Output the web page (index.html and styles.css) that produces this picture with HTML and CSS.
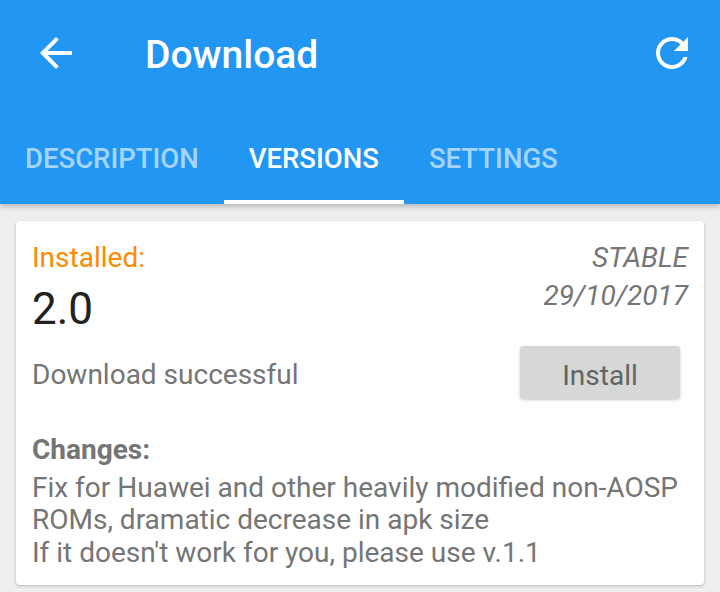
FILE: index.html
```html
<!DOCTYPE html>
<html lang="en">
<head>
<meta charset="utf-8">
<title>Download</title>
<link rel="stylesheet" href="styles.css">
</head>
<body>
<header class="appbar">
  <div class="toolbar">
    <svg class="icon back" viewBox="0 0 24 24" width="48" height="48"><path fill="#fff" d="M20 11H7.83l5.59-5.59L12 4l-8 8 8 8 1.41-1.41L7.83 13H20v-2z"/></svg>
    <h1 class="title">Download</h1>
    <svg class="icon refresh" viewBox="0 0 24 24" width="48" height="48"><path fill="#fff" d="M17.65 6.35C16.2 4.9 14.21 4 12 4c-4.42 0-7.99 3.58-7.99 8s3.57 8 7.99 8c3.73 0 6.84-2.55 7.73-6h-2.08c-.82 2.33-3.04 4-5.65 4-3.31 0-6-2.69-6-6s2.69-6 6-6c1.66 0 3.14.69 4.22 1.78L13 11h7V4l-2.35 2.35z"/></svg>
  </div>
  <nav class="tabs">
    <div class="tab">DESCRIPTION</div>
    <div class="tab active">VERSIONS</div>
    <div class="tab">SETTINGS</div>
  </nav>
</header>
<main class="content">
  <section class="card">
    <div class="row top">
      <div class="col">
        <div class="installed">Installed:</div>
        <div class="version">2.0</div>
      </div>
      <div class="col meta">
        <div class="channel">STABLE</div>
        <div class="date">29/10/2017</div>
      </div>
    </div>
    <div class="row status-row">
      <div class="status">Download successful</div>
      <button class="btn">Install</button>
    </div>
    <div class="changes">
      <div class="changes-title">Changes:</div>
      <div class="changes-line">Fix for Huawei and other heavily modified non-AOSP ROMs, dramatic decrease in apk size</div>
      <div class="changes-line">If it doesn't work for you, please use v.1.1</div>
    </div>
  </section>
</main>
</body>
</html>
```
FILE: styles.css
```css
* { box-sizing: border-box; }
html, body { margin: 0; padding: 0; }
body {
  width: 720px;
  height: 592px;
  overflow: hidden;
  background: #eeeeee;
  font-family: Roboto, "Noto Sans", "Liberation Sans", sans-serif;
}
.appbar {
  background: #2196f3;
  color: #fff;
  box-shadow: 0 2px 6px rgba(0,0,0,0.28);
  position: relative;
  z-index: 1;
}
.toolbar {
  height: 110px;
  display: flex;
  align-items: center;
  padding: 0 24px 5px 32px;
}
.icon { display: block; flex: none; }
.title {
  margin: 0 0 0 65px;
  padding-top: 5px;
  font-size: 39px;
  font-weight: 500;
  line-height: 48px;
  flex: 1;
}
.tabs {
  height: 94px;
  display: flex;
}
.tab {
  padding: 3px 25px 0;
  display: flex;
  align-items: center;
  font-size: 27.5px;
  font-weight: 500;
  color: rgba(255,255,255,0.62);
  position: relative;
}
.tab.active { color: #fff; }
.tab.active::after {
  content: "";
  position: absolute;
  left: 0; right: 0; bottom: 0;
  height: 4px;
  background: #fff;
}
.content { padding: 17px 16px 0; }
.card {
  background: #fff;
  border-radius: 4px;
  box-shadow: 0 1px 3px rgba(0,0,0,0.25);
  padding: 21px 16px 16px 16px;
  height: 364px;
}
.row { display: flex; justify-content: space-between; }
.installed { color: #ff8a00; font-size: 28px; line-height: 32px; }
.version { color: #212121; font-size: 44px; line-height: 52px; margin-top: 9px; }
.meta { text-align: right; font-style: italic; color: #757575; font-size: 28px; line-height: 32px; }
.date { margin-top: 6px; }
.status-row { align-items: center; margin-top: 11px; }
.status { color: #757575; font-size: 28px; line-height: 32px; padding-top: 5px; }
.btn {
  width: 160px;
  height: 53px;
  margin-right: 8px;
  border: none;
  border-radius: 4px;
  background: #d6d7d7;
  box-shadow: 0 1px 3px rgba(0,0,0,0.22);
  color: #636363;
  font-family: inherit;
  font-size: 28px;
  padding: 5px 0 0;
}
.changes { margin-top: 35px; color: #757575; font-size: 28px; }
.changes-title { font-weight: 700; line-height: 32px; margin-bottom: 6px; }
.changes-line { line-height: 32.3px; }
```
